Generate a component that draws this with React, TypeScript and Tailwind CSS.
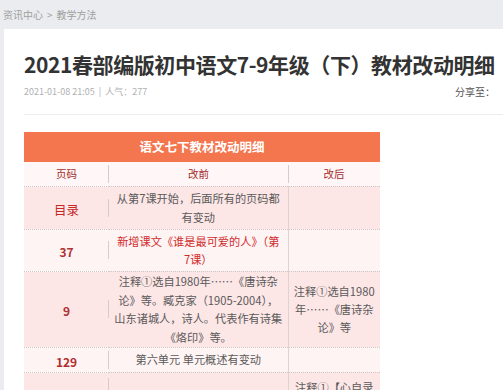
const font = { fontFamily: '"Noto Sans CJK SC", "Noto Sans", sans-serif' };

interface Row {
  page: string;
  pageKind: "word" | "num";
  before: string[];
  beforeRed?: boolean;
  after: string[];
  tone: "pink" | "light";
  h: string;
}

const rows: Row[] = [
  { page: "目录", pageKind: "word", before: ["从第7课开始，后面所有的页码都", "有变动"], after: [], tone: "pink", h: "h-[43px]" },
  { page: "37", pageKind: "num", before: ["新增课文《谁是最可爱的人》（第", "7课）"], beforeRed: true, after: [], tone: "light", h: "h-[42px]" },
  {
    page: "9",
    pageKind: "num",
    before: ["注释①选自1980年……《唐诗杂", "论》等。臧克家（1905-2004），", "山东诸城人，诗人。代表作有诗集", "《烙印》等。"],
    after: ["注释①选自1980", "年……《唐诗杂", "论》等"],
    tone: "pink",
    h: "h-[76px]",
  },
  { page: "129", pageKind: "num", before: ["第六单元 单元概述有变动"], after: [], tone: "light", h: "h-[21px]" },
  {
    page: "",
    pageKind: "num",
    before: [],
    after: ["注释①【心自录"],
    tone: "pink",
    h: "h-[30px]",
  },
];

function Divider() {
  return <span className="absolute right-0 top-1/2 -translate-y-1/2 h-[18px] w-px bg-[#d6cccc]" />;
}

export default function App() {
  return (
    <div className="w-[503px] h-[390px] overflow-hidden bg-[#eaecef]" style={font}>
      <div className="h-[29px] pl-[3px] flex items-center gap-[4px] text-[10px] text-[#a0a0a0]">
        <span>资讯中心</span>
        <span>&gt;</span>
        <span>教学方法</span>
      </div>
      <div className="ml-[4px] bg-white h-[361px] pl-[20px] pt-[22px]">
        <h1 className="text-[21px] leading-[26px] font-bold text-[#333] whitespace-nowrap tracking-[-0.4px]">
          2021春部编版初中语文7-9年级（下）教材改动明细
        </h1>
        <div className="flex items-center justify-between pr-[8px] mt-[8px] h-[14px]">
          <div className="text-[9px] text-[#b0b0b0] flex items-center gap-[4px]">
            <span>2021-01-08 21:05</span>
            <span>|</span>
            <span>人气：277</span>
          </div>
          <span className="text-[10px] text-[#555] mt-[-2px]">分享至：</span>
        </div>
        <div className="h-px bg-[#ececec] mt-[15px]" />
        <table className="mt-[17px] w-[356px] border-collapse table-fixed">
          <colgroup>
            <col className="w-[85px]" />
            <col className="w-[179px]" />
            <col className="w-[92px]" />
          </colgroup>
          <thead>
            <tr className="h-[30px] bg-[#f4764f]">
              <th colSpan={3} className="text-white text-[12.5px] font-bold">
                语文七下教材改动明细
              </th>
            </tr>
            <tr className="h-[24px] bg-[#fff7f7] border-b border-dotted border-[#cfc6c6] text-[10.5px] text-[#a52a2a]">
              <th className="relative font-normal">
                页码
                <Divider />
              </th>
              <th className="font-normal">改前</th>
              <th className="relative font-normal">
                改后
                <span className="absolute left-0 top-1/2 -translate-y-1/2 h-[18px] w-px bg-[#d6cccc]" />
              </th>
            </tr>
          </thead>
          <tbody>
            {rows.map((r, i) => (
              <tr
                key={i}
                className={`${r.h} border-b border-dotted border-[#cfc6c6] ${r.tone === "pink" ? "bg-[#fde6e6]" : "bg-[#fff4f4]"}`}
              >
                <td className="relative text-center">
                  <span
                    className={
                      r.pageKind === "word"
                        ? "text-[12.5px] text-[#c62828]"
                        : "text-[12px] font-bold text-[#b03030]"
                    }
                  >
                    {r.page}
                  </span>
                  <Divider />
                </td>
                <td className="text-center align-middle">
                  <div className={`text-[11.2px] leading-[18.5px] ${r.beforeRed ? "text-[#d12b2b]" : "text-[#5a5a5a]"}`}>
                    {r.before.map((l, j) => (
                      <div key={j} className="whitespace-nowrap">
                        {l}
                      </div>
                    ))}
                  </div>
                </td>
                <td className="text-center align-middle border-l border-[#ddd3d3]">
                  <div className="text-[11.2px] leading-[18px] text-[#5a5a5a]">
                    {r.after.map((l, j) => (
                      <div key={j} className="whitespace-nowrap">
                        {l}
                      </div>
                    ))}
                  </div>
                </td>
              </tr>
            ))}
          </tbody>
        </table>
      </div>
    </div>
  );
}
